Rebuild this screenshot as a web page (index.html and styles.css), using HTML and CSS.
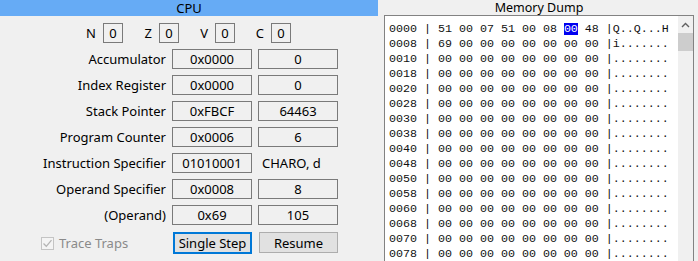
FILE: index.html
```
<!DOCTYPE html>
<html lang="en">
<head>
  <meta charset="UTF-8" />
  <title>Pep/8 CPU</title>
  <link rel="stylesheet" href="styles.css">
</head>
<body>
  <div class="cpu">
    <div class="cpu-title">CPU</div>

    <div class="flags">
      <div class="flag"><span>N</span><div class="flag-box">0</div></div>
      <div class="flag"><span>Z</span><div class="flag-box">0</div></div>
      <div class="flag"><span>V</span><div class="flag-box">0</div></div>
      <div class="flag"><span>C</span><div class="flag-box">0</div></div>
    </div>

    <div class="registers">
      <div class="reg-label">Accumulator</div>
      <div class="reg-box">0x0000</div>
      <div class="reg-box">0</div>

      <div class="reg-label">Index Register</div>
      <div class="reg-box">0x0000</div>
      <div class="reg-box">0</div>

      <div class="reg-label">Stack Pointer</div>
      <div class="reg-box">0xFBCF</div>
      <div class="reg-box">64463</div>

      <div class="reg-label">Program Counter</div>
      <div class="reg-box">0x0006</div>
      <div class="reg-box">6</div>

      <div class="reg-label">Instruction Specifier</div>
      <div class="reg-box">01010001</div>
      <div class="reg-text">CHARO, d</div>

      <div class="reg-label">Operand Specifier</div>
      <div class="reg-box">0x0008</div>
      <div class="reg-box">8</div>

      <div class="reg-label">(Operand)</div>
      <div class="reg-box">0x69</div>
      <div class="reg-box">105</div>
    </div>

    <div class="controls">
      <label class="trace">
        <span class="check">
          <svg width="11" height="11" viewBox="0 0 11 11"><path d="M1.5 5.5 L4.3 8.3 L9.5 2.2" fill="none" stroke="#b4b4b4" stroke-width="1.3"/></svg>
        </span>
        Trace Traps
      </label>
      <button class="btn btn-focus">Single Step</button>
      <button class="btn">Resume</button>
    </div>
  </div>

  <div class="mem">
    <div class="mem-title">Memory Dump</div>
    <div class="mem-box">
      <pre class="dump" id="dump"></pre>
      <div class="scrollbar">
        <div class="arrow">
          <svg width="9" height="6" viewBox="0 0 9 6"><path d="M1 5 L4.5 1.5 L8 5" fill="none" stroke="#606060" stroke-width="1.4"/></svg>
        </div>
        <div class="thumb"></div>
      </div>
    </div>
  </div>

  <script>
    const bytes = [0x51, 0x00, 0x07, 0x51, 0x00, 0x08, 0x00, 0x48, 0x69];
    const dump = document.getElementById("dump");
    const hex = (n, w) => n.toString(16).toUpperCase().padStart(w, "0");
    let html = "";

    for (let addr = 0; addr < 0x80; addr += 8) {
      let line = hex(addr, 4) + " | ";
      let chars = "";
      for (let i = 0; i < 8; i++) {
        const b = bytes[addr + i] || 0;
        let cell = hex(b, 2);
        if (addr + i === 6) {
          cell = '<span class="sel">' + cell + "</span>";
        }
        line += cell + " ";
        chars += b >= 32 && b < 127 ? String.fromCharCode(b) : ".";
      }
      html += line + "|" + chars + "\n";
    }
    dump.innerHTML = html;
  </script>
</body>
</html>
```

FILE: styles.css
```
body {
  margin: 0;
  background: #f0f0f0;
  font-family: "Noto Sans", sans-serif;
  font-size: 13px;
  color: #000;
  display: flex;
  height: 261px;
  overflow: hidden;
}
.cpu {
  width: 378px;
}
.cpu-title {
  height: 16px;
  line-height: 16px;
  background: #66abf5;
  text-align: center;
}
.flags {
  display: flex;
  padding-left: 67px;
  margin-top: 7px;
}
.flag {
  width: 56px;
  display: flex;
  justify-content: flex-end;
  align-items: center;
  gap: 7px;
}
.flag-box {
  width: 20px;
  height: 20px;
  box-sizing: border-box;
  border: 1px solid #7a7a7a;
  text-align: center;
  line-height: 18px;
}
.registers {
  display: grid;
  grid-template-columns: 166px 80px 80px;
  grid-auto-rows: 20px;
  column-gap: 6px;
  row-gap: 6px;
  margin-top: 6px;
}
.reg-label {
  text-align: right;
  line-height: 20px;
}
.reg-box {
  box-sizing: border-box;
  border: 1px solid #7a7a7a;
  text-align: center;
  line-height: 18px;
}
.reg-text {
  line-height: 20px;
  padding-left: 4px;
}
.controls {
  display: grid;
  grid-template-columns: 166px 80px 80px;
  column-gap: 6px;
  margin-top: 7px;
  height: 22px;
}
.trace {
  display: flex;
  align-items: center;
  gap: 5px;
  padding-left: 41px;
  color: #8a8a8a;
}
.check {
  width: 13px;
  height: 13px;
  box-sizing: border-box;
  border: 1px solid #c4c4c4;
  background: #f4f4f4;
  display: flex;
  align-items: center;
  justify-content: center;
}
.btn {
  font-family: inherit;
  font-size: 13px;
  width: 79px;
  height: 21px;
  margin-left: 1px;
  padding: 0;
  background: #e1e1e1;
  border: 1px solid #adadad;
  color: #000;
}
.btn-focus {
  height: 22px;
  border: 2px solid #0078d7;
}
.mem {
  flex: 1;
  padding: 0 4px 0 6px;
  display: flex;
  flex-direction: column;
}
.mem-title {
  height: 15px;
  line-height: 16px;
  font-size: 12.5px;
  text-align: center;
}
.mem-box {
  flex: 1;
  background: #fff;
  border: 1px solid #828282;
  border-bottom: none;
  display: flex;
}
.dump {
  flex: 1;
  margin: 0;
  padding: 6px 0 0 4px;
  font-family: "Liberation Mono", monospace;
  font-size: 11.67px;
  line-height: 15px;
  color: #111;
}
.sel {
  display: inline-block;
  line-height: 12px;
  background: #0000f0;
  color: #fff;
}
.scrollbar {
  width: 15px;
  background: #f0f0f0;
  display: flex;
  flex-direction: column;
  align-items: center;
}
.arrow {
  height: 17px;
  display: flex;
  align-items: center;
  justify-content: center;
}
.thumb {
  width: 15px;
  height: 18px;
  background: #cdcdcd;
}
```
